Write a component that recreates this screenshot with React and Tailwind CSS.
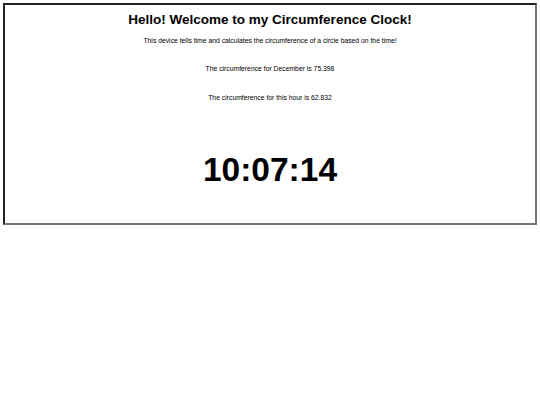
import React from "react";

const App = () => {
  return (
    <div className="bg-white min-h-[405px] pt-[3px] px-[3px]" style={{ fontFamily: '"Liberation Sans", Arial, sans-serif' }}>
      <div className="border-2 border-[#777] [border-style:inset] h-[222px] text-center text-black">
        <h1 className="text-[13.5px] font-bold leading-none pt-[8px]">
          Hello! Welcome to my Circumference Clock!
        </h1>
        <p className="text-[6.8px] leading-none mt-[11px]">
          This device tells time and calculates the circumference of a circle based on the time!
        </p>
        <p className="text-[6.8px] leading-none mt-[22px]">
          The circumference for December is 75.398
        </p>
        <p className="text-[6.8px] leading-none mt-[22px]">
          The circumference for this hour is 62.832
        </p>
        <div className="text-[33.5px] font-bold leading-none mt-[51px]">10:07:14</div>
      </div>
    </div>
  );
};

export default App;
